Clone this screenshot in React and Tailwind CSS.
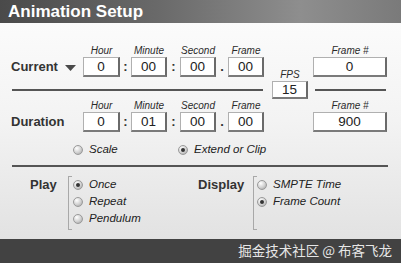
import React from "react";

const Field = ({ label, value, w }) => (
  <div className={`flex flex-col items-center ${w}`}>
    <div className="h-[12px] text-[10px] leading-[12px] italic text-[#2a2a2a] whitespace-nowrap">{label}</div>
    <div className="w-full h-[20px] bg-white border border-[#b0b0b0] border-r-2 border-b-2 border-r-[#6a6a6a] border-b-[#7a7a7a] flex items-center justify-center text-[13.5px] text-[#222] leading-none">
      {value}
    </div>
  </div>
);

const Sep = ({ ch, w }) => (
  <div className={`h-[20px] flex items-center justify-center text-[13px] font-bold text-[#333] ${w}`}>{ch}</div>
);

const TimeRow = ({ title, arrow, values, frame }) => (
  <div className="flex items-end pl-[11px]">
    <div className="w-[72px] h-[20px] flex items-center gap-[7px]">
      <span className="text-[13px] font-bold text-[#333]">{title}</span>
      {arrow && (
        <svg width="11" height="6" viewBox="0 0 11 6" className="mt-[1px]">
          <polygon points="0,0 11,0 5.5,6" fill="#4a4a4a" />
        </svg>
      )}
    </div>
    <Field label="Hour" value={values[0]} w="w-[37px]" />
    <Sep ch=":" w="w-[11px]" />
    <Field label="Minute" value={values[1]} w="w-[36px]" />
    <Sep ch=":" w="w-[13px]" />
    <Field label="Second" value={values[2]} w="w-[36px]" />
    <Sep ch="." w="w-[12px]" />
    <Field label="Frame" value={values[3]} w="w-[36px]" />
    <div className="w-[49px]" />
    <Field label="Frame #" value={frame} w="w-[74px]" />
  </div>
);

const Radio = ({ on }) => (
  <span className="w-[10px] h-[10px] rounded-full border border-[#9a9a9a] bg-[radial-gradient(circle_at_35%_30%,#ffffff,#d0d0d0_55%,#9c9c9c)] flex items-center justify-center shrink-0">
    {on && <span className="w-[4px] h-[4px] rounded-full bg-[#333]" />}
  </span>
);

const RadioItem = ({ on, label, w }) => (
  <div className={`flex items-center gap-[6px] h-[17px] ${w || ""}`}>
    <Radio on={on} />
    <span className="text-[11.5px] italic text-[#222] whitespace-nowrap">{label}</span>
  </div>
);

const Bracket = () => (
  <div className="absolute left-0 top-0 bottom-0 w-[4px] border-l border-t border-b border-[#a8a8a8]" />
);

export default function App() {
  return (
    <div
      className="w-[401px] h-[263px] flex flex-col overflow-hidden"
      style={{ fontFamily: '"Liberation Sans", Arial, "Noto Sans CJK SC", sans-serif' }}
    >
      <div className="h-[23px] shrink-0 bg-[linear-gradient(90deg,#4a4a4a_0%,#6a6a6a_40%,#8e8e8e_75%,#7a7a7a_100%)] flex items-center pl-[8px]">
        <span className="text-[17px] font-bold text-white leading-none">Animation Setup</span>
      </div>
      <div className="flex-1 flex flex-col bg-[linear-gradient(180deg,#fbfbfb_0%,#f3f3f3_45%,#e2e2e2_100%)] pt-[22px]">
        <TimeRow title="Current" arrow values={["0", "00", "00", "00"]} frame="0" />
        <div className="flex items-end -mt-[8px] pl-[12px] pr-[15px]">
          <div className="flex-1 h-[2px] bg-[#555] mb-[8px]" />
          <div className="flex flex-col items-center w-[36px] ml-[9px] mr-[7px]">
            <div className="h-[12px] text-[10px] leading-[12px] italic text-[#2a2a2a]">FPS</div>
            <div className="w-full h-[18px] bg-white border border-[#b0b0b0] border-r-2 border-b-2 border-r-[#6a6a6a] border-b-[#7a7a7a] flex items-center justify-center text-[13.5px] text-[#222] leading-none">
              15
            </div>
          </div>
          <div className="w-[71px] h-[2px] bg-[#555] mb-[8px]" />
        </div>
        <div className="mt-[1px]">
          <TimeRow title="Duration" values={["0", "01", "00", "00"]} frame="900" />
        </div>
        <div className="flex items-center pl-[73px] mt-[9px]">
          <RadioItem label="Scale" w="w-[105px]" />
          <RadioItem on label="Extend or Clip" />
        </div>
        <div className="h-[2px] bg-[#555] ml-[12px] mr-[13px] mt-[7px]" />
        <div className="flex mt-[9px]">
          <div className="flex w-[198px] pl-[30px]">
            <div className="w-[38px] h-[17px] flex items-center text-[13px] font-bold text-[#333]">Play</div>
            <div className="relative pl-[5px] pb-[3px]">
              <Bracket />
              <RadioItem on label="Once" />
              <RadioItem label="Repeat" />
              <RadioItem label="Pendulum" />
            </div>
          </div>
          <div className="flex">
            <div className="w-[55px] h-[17px] flex items-center text-[13px] font-bold text-[#333]">Display</div>
            <div className="relative pl-[4px] pb-[2px]">
              <Bracket />
              <RadioItem label="SMPTE Time" />
              <RadioItem on label="Frame Count" />
            </div>
          </div>
        </div>
      </div>
      <div className="h-[24px] shrink-0 bg-[#424242] flex items-center justify-end pr-[9px]">
        <span
          className="text-[13.5px] text-[#e6e6e6] leading-none"
          style={{ fontFamily: '"Noto Sans CJK SC", "Liberation Sans", sans-serif' }}
        >
          掘金技术社区 @ 布客飞龙
        </span>
      </div>
    </div>
  );
}
